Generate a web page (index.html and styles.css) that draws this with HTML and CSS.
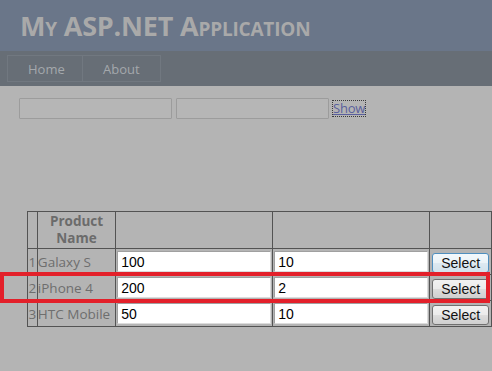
FILE: index.html
```html
<!DOCTYPE html>
<html lang="en">
<head>
    <meta charset="UTF-8">
    <meta name="viewport" content="width=device-width, initial-scale=1.0">
    <title>My ASP.NET Application</title>
    <link rel="stylesheet" href="styles.css">
</head>
<body>
    <header class="header">
        <h1 class="title">My ASP.NET Application</h1>
    </header>
    <nav class="menu">
        <ul class="menu-list">
            <li><a href="#">Home</a></li>
            <li><a href="#">About</a></li>
        </ul>
    </nav>
    <main class="main">
        <div class="search">
            <input type="text" class="search-box">
            <input type="text" class="search-box">
            <a href="#" class="show-link">Show</a>
        </div>
        <div class="grid-wrap">
            <table class="grid">
                <tr class="grid-head">
                    <th class="col-num"></th>
                    <th class="col-name">Product<br>Name</th>
                    <th class="col-val"></th>
                    <th class="col-val2"></th>
                    <th class="col-btn"></th>
                </tr>
                <tr>
                    <td class="col-num">1</td>
                    <td class="col-name">Galaxy S</td>
                    <td><input type="text" class="cell-box" value="100"></td>
                    <td><input type="text" class="cell-box" value="10"></td>
                    <td><button class="select-btn focused">Select</button></td>
                </tr>
                <tr>
                    <td class="col-num">2</td>
                    <td class="col-name">iPhone 4</td>
                    <td><input type="text" class="cell-box" value="200"></td>
                    <td><input type="text" class="cell-box" value="2"></td>
                    <td><button class="select-btn">Select</button></td>
                </tr>
                <tr>
                    <td class="col-num">3</td>
                    <td class="col-name">HTC Mobile</td>
                    <td><input type="text" class="cell-box" value="50"></td>
                    <td><input type="text" class="cell-box" value="10"></td>
                    <td><button class="select-btn">Select</button></td>
                </tr>
            </table>
        </div>
    </main>
    <div class="highlight"></div>
</body>
</html>
```

FILE: styles.css
```css
body {
    margin: 0;
    background-color: #b4b4b4;
    font-family: "Open Sans", "Noto Sans", sans-serif;
    color: #6e6e6e;
}
.header {
    background-color: #6a7689;
    height: 51px;
    box-sizing: border-box;
    padding: 8px 0 0 20px;
}
.title {
    margin: 0;
    font-size: 27px;
    font-variant: small-caps;
    font-weight: bold;
    color: #a9a9a9;
    line-height: 36px;
    letter-spacing: -0.2px;
}
.menu {
    background-color: #676e76;
    height: 35px;
    box-sizing: border-box;
    padding: 4px 0 0 7px;
}
.menu-list {
    list-style-type: none;
    margin: 0;
    padding: 0;
    display: flex;
}
.menu-list li {
    border: 1px solid #717880;
    margin-right: -1px;
}
.menu-list a {
    display: block;
    height: 25px;
    line-height: 26px;
    padding: 0 20px;
    font-size: 13px;
    color: #a4a8ac;
    text-decoration: none;
}
.menu-list li:first-child a {
    width: 34px;
}
.menu-list li:last-child a {
    width: 37px;
}
.main {
    padding: 12px 0 0 19px;
}
.search {
    display: flex;
    align-items: center;
    gap: 4px;
}
.search-box {
    width: 153px;
    height: 21px;
    box-sizing: border-box;
    margin: 0;
    border: 1px solid #9c9c9c;
    border-radius: 1px;
    background-color: #b6b6b6;
}
.show-link {
    font-size: 13px;
    color: #5a5f9c;
    outline: 1px dotted #3a3a3a;
    line-height: 15px;
    letter-spacing: -0.2px;
}
.grid-wrap {
    margin: 92px 0 0 8px;
}
.grid {
    border-collapse: collapse;
    border: 1px solid #535353;
}
.grid th,
.grid td {
    border: 1px solid #535353;
    padding: 0;
    font-size: 13.5px;
    height: 25px;
}
.grid-head th {
    height: 36px;
    font-weight: bold;
    color: #6b6b6b;
    line-height: 17px;
    text-align: center;
}
.col-num {
    width: 9px;
    text-align: center;
}
.col-name {
    width: 78px;
    padding-left: 1px;
    white-space: nowrap;
}
.col-val,
.col-val2 {
    width: 155px;
}
.col-btn {
    width: 61px;
}
.cell-box {
    display: block;
    width: 154px;
    height: 21px;
    box-sizing: border-box;
    margin: 1px;
    border: 1px solid #a0a0a0;
    border-right-color: #dcdcdc;
    border-bottom-color: #dcdcdc;
    background-color: #fff;
    font-family: "Liberation Sans", Arial, sans-serif;
    font-size: 14px;
    color: #000;
    padding: 1px 3px 0;
}
.select-btn {
    display: block;
    margin: 2px 0 0 2px;
    width: 57px;
    height: 20px;
    padding: 0;
    border: 1px solid #707070;
    border-radius: 3px;
    background: linear-gradient(#f2f2f2 0%, #ebebeb 50%, #dddddd 51%, #cfcfcf 100%);
    font-family: "Liberation Sans", Arial, sans-serif;
    font-size: 14px;
    color: #111;
}
.select-btn.focused {
    border-color: #4f8fbf;
    background: linear-gradient(#f3f8fb 0%, #ebf3f8 50%, #dde9f1 51%, #d2e2ec 100%);
}
.highlight {
    position: absolute;
    left: 0;
    top: 272px;
    width: 490px;
    height: 31px;
    box-sizing: border-box;
    border: 4px solid #e3202a;
}
```
